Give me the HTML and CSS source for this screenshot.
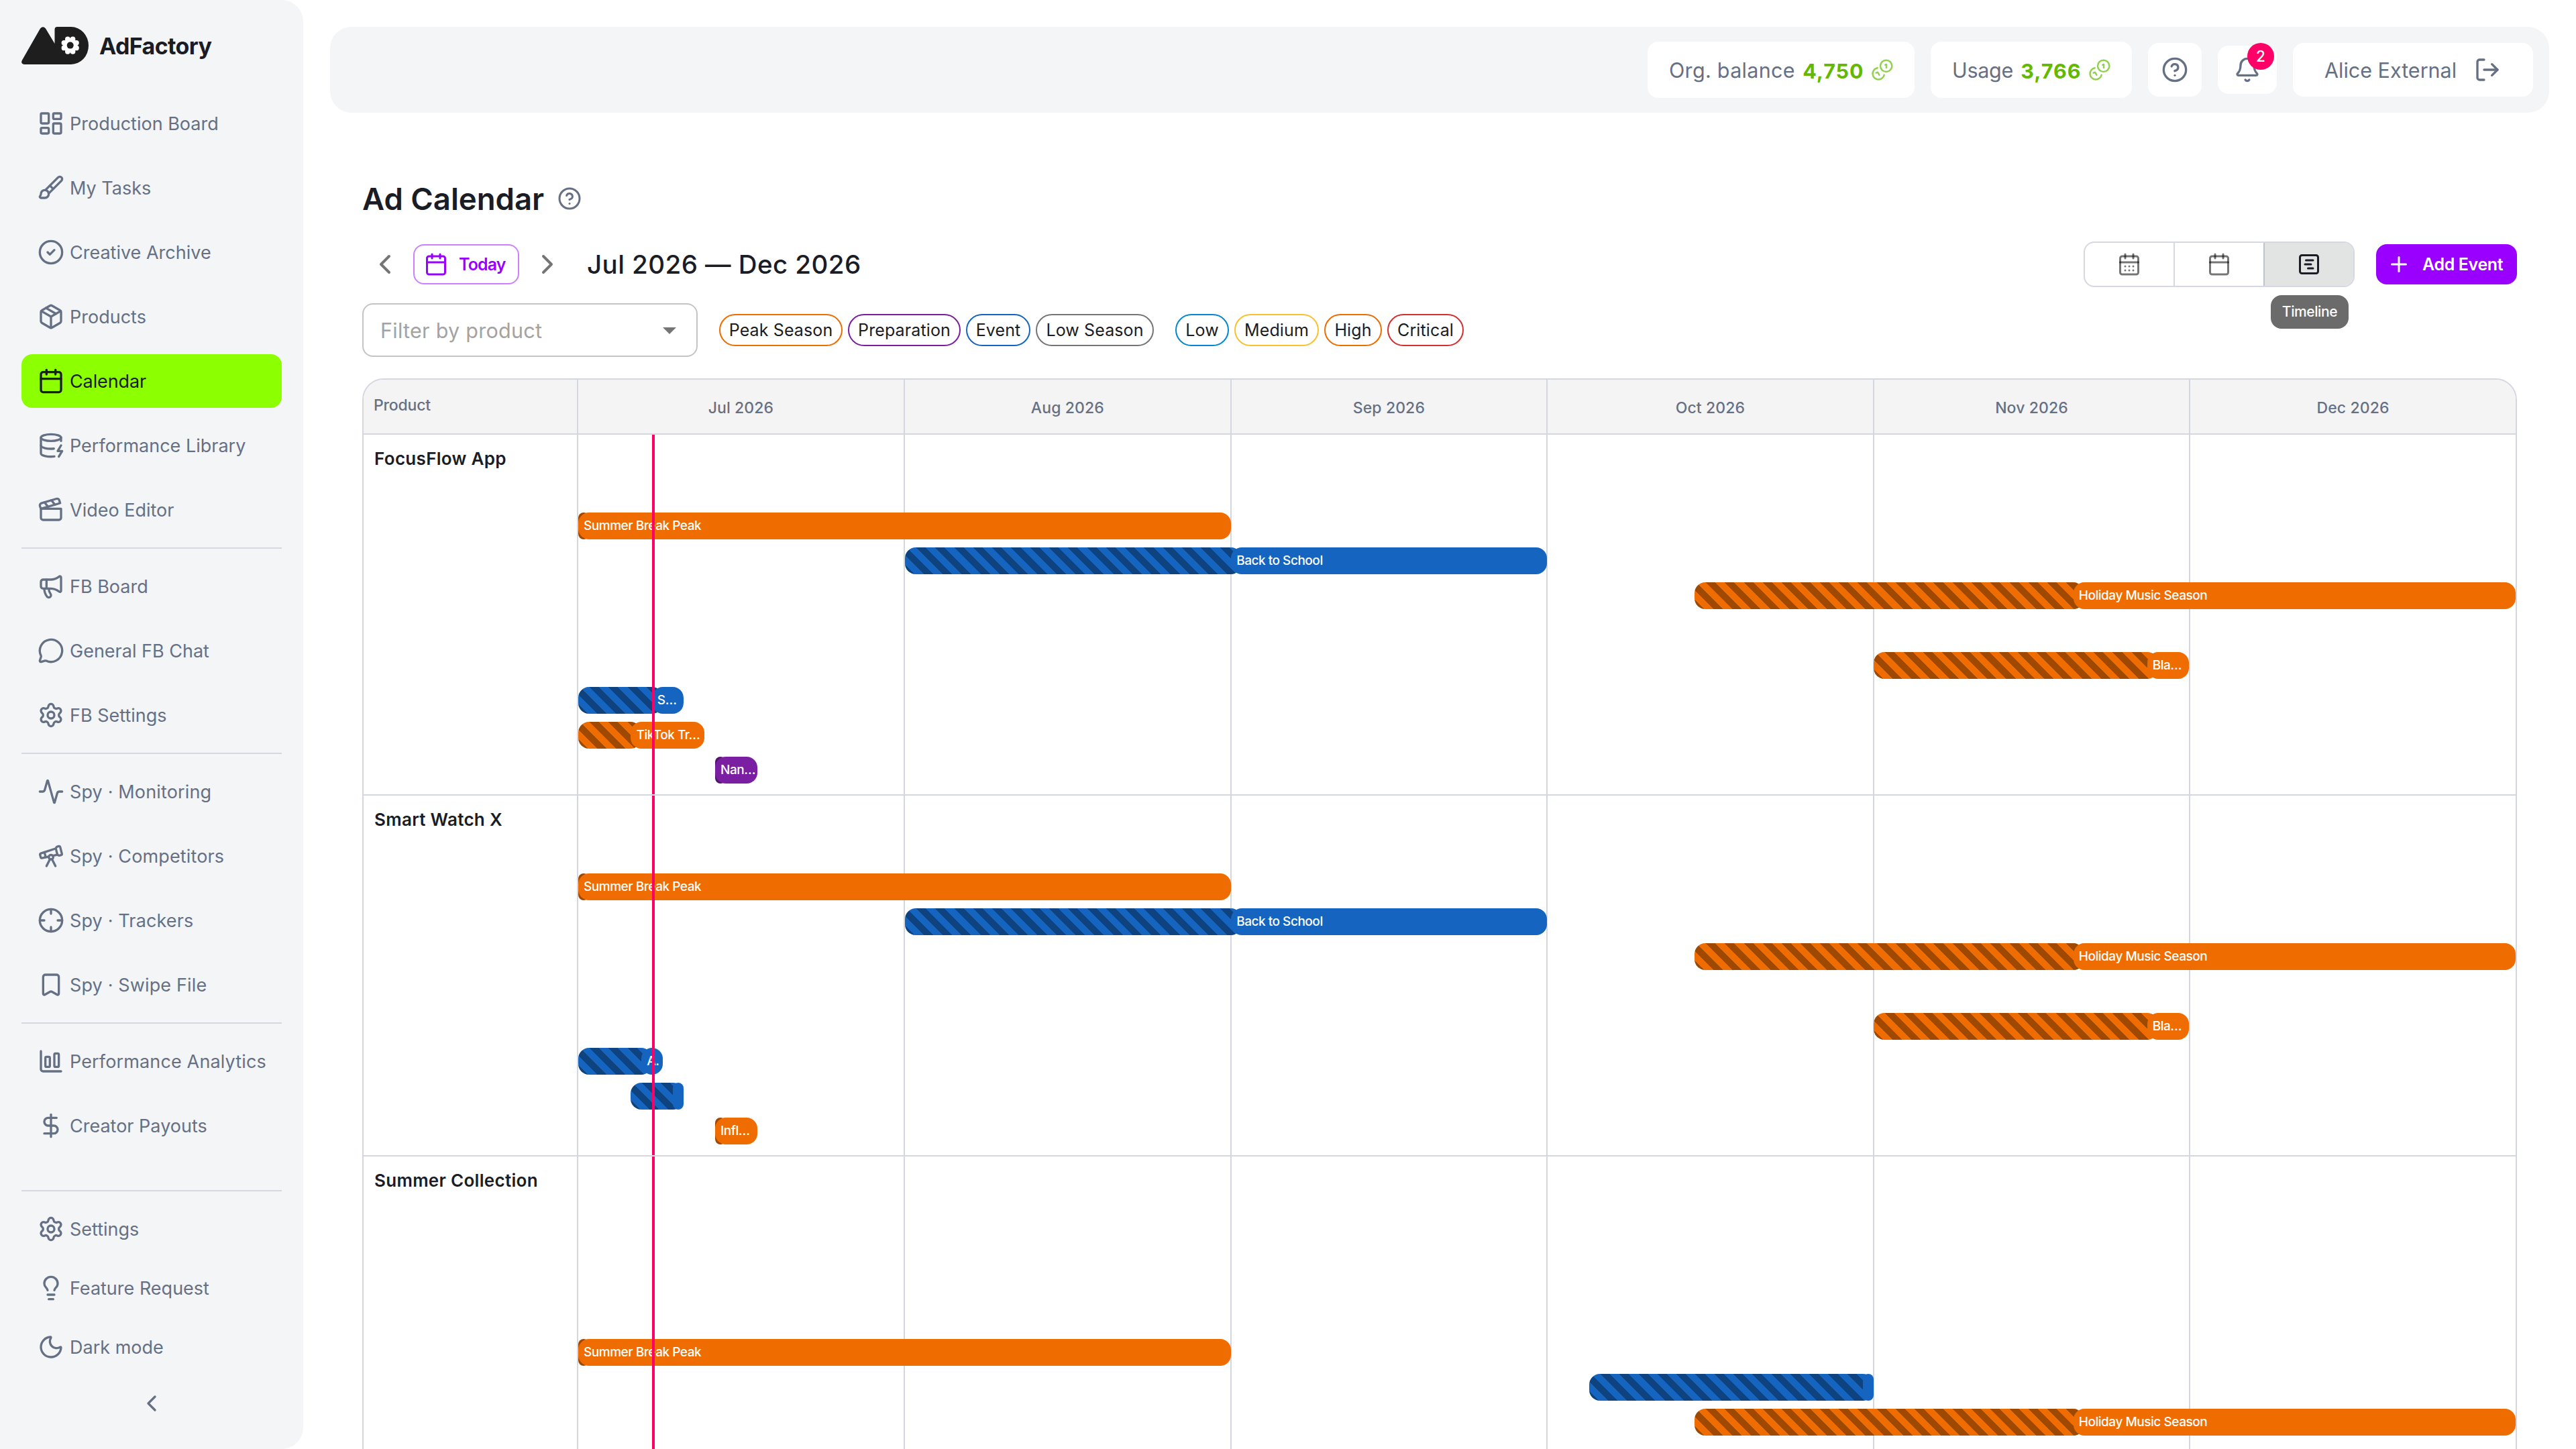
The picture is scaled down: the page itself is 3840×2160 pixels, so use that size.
FILE: index.html
```html
<!DOCTYPE html>
<html lang="en">
<head>
<meta charset="utf-8">
<title>AdFactory – Ad Calendar</title>
<link rel="stylesheet" href="styles.css">
</head>
<body>
<svg class="sprite" aria-hidden="true">
  <symbol id="i-board" viewBox="0 0 24 24"><rect width="7" height="9" x="3" y="3" rx="1"/><rect width="7" height="5" x="14" y="3" rx="1"/><rect width="7" height="9" x="14" y="12" rx="1"/><rect width="7" height="5" x="3" y="16" rx="1"/></symbol>
  <symbol id="i-brush" viewBox="0 0 24 24"><path d="m11 10 3 3"/><path d="M6.5 21A3.5 3.5 0 1 0 3 17.5a2.62 2.62 0 0 1-.708 1.792A1 1 0 0 0 3 21z"/><path d="M9.969 17.031 21.378 5.624a1 1 0 0 0-3.002-3.002L6.967 14.031"/></symbol>
  <symbol id="i-check" viewBox="0 0 24 24"><circle cx="12" cy="12" r="10"/><path d="m9 12 2 2 4-4"/></symbol>
  <symbol id="i-package" viewBox="0 0 24 24"><path d="M11 21.73a2 2 0 0 0 2 0l7-4A2 2 0 0 0 21 16V8a2 2 0 0 0-1-1.73l-7-4a2 2 0 0 0-2 0l-7 4A2 2 0 0 0 3 8v8a2 2 0 0 0 1 1.73z"/><path d="M12 22V12"/><path d="M3.29 7 12 12l8.71-5"/><path d="m7.5 4.27 9 5.15"/></symbol>
  <symbol id="i-calendar" viewBox="0 0 24 24"><path d="M8 2v4"/><path d="M16 2v4"/><rect width="18" height="18" x="3" y="4" rx="2"/><path d="M3 10h18"/></symbol>
  <symbol id="i-calendar-days" viewBox="0 0 24 24"><path d="M8 2v4"/><path d="M16 2v4"/><rect width="18" height="18" x="3" y="4" rx="2"/><path d="M3 10h18"/><path d="M8 14h.01"/><path d="M12 14h.01"/><path d="M16 14h.01"/><path d="M8 18h.01"/><path d="M12 18h.01"/><path d="M16 18h.01"/></symbol>
  <symbol id="i-gantt" viewBox="0 0 24 24"><rect width="18" height="18" x="3" y="3" rx="2"/><path d="M9 8h7"/><path d="M8 12h6"/><path d="M11 16h5"/></symbol>
  <symbol id="i-database" viewBox="0 0 24 24"><ellipse cx="12" cy="5" rx="9" ry="3"/><path d="M3 5V19A9 3 0 0 0 15 21.84"/><path d="M21 5V8"/><path d="M21 12L18 17H22L19 22"/><path d="M3 12A9 3 0 0 0 14.59 14.87"/></symbol>
  <symbol id="i-clapper" viewBox="0 0 24 24"><path d="M20.2 6 3 11l-.9-2.4c-.3-1.1.3-2.2 1.3-2.5l13.5-4c1.1-.3 2.2.3 2.5 1.3Z"/><path d="m6.2 5.3 3.1 3.9"/><path d="m12.4 3.4 3.1 4"/><path d="M3 11h18v8a2 2 0 0 1-2 2H5a2 2 0 0 1-2-2Z"/></symbol>
  <symbol id="i-megaphone" viewBox="0 0 24 24"><path d="M11 6a13 13 0 0 0 8.4-2.8A1 1 0 0 1 21 4v12a1 1 0 0 1-1.6.8A13 13 0 0 0 11 14H5a2 2 0 0 1-2-2V8a2 2 0 0 1 2-2z"/><path d="M6 14a12 12 0 0 0 2.4 7.2 2 2 0 0 0 3.2-2.4A8 8 0 0 1 10 14"/><path d="M8 6v8"/></symbol>
  <symbol id="i-message" viewBox="0 0 24 24"><path d="M2.992 16.342a2 2 0 0 1 .094 1.167l-1.065 3.29a1 1 0 0 0 1.236 1.168l3.413-.998a2 2 0 0 1 1.099.092 10 10 0 1 0-4.777-4.719"/></symbol>
  <symbol id="i-settings" viewBox="0 0 24 24"><path d="M9.671 4.136a2.34 2.34 0 0 1 4.659 0 2.34 2.34 0 0 0 3.319 1.915 2.34 2.34 0 0 1 2.33 4.033 2.34 2.34 0 0 0 0 3.831 2.34 2.34 0 0 1-2.33 4.033 2.34 2.34 0 0 0-3.319 1.915 2.34 2.34 0 0 1-4.659 0 2.34 2.34 0 0 0-3.32-1.915 2.34 2.34 0 0 1-2.33-4.033 2.34 2.34 0 0 0 0-3.831A2.34 2.34 0 0 1 6.35 6.051a2.34 2.34 0 0 0 3.319-1.915"/><circle cx="12" cy="12" r="3"/></symbol>
  <symbol id="i-activity" viewBox="0 0 24 24"><path d="M22 12h-2.48a2 2 0 0 0-1.93 1.46l-2.35 8.36a.25.25 0 0 1-.48 0L9.24 2.18a.25.25 0 0 0-.48 0l-2.35 8.36A2 2 0 0 1 4.49 12H2"/></symbol>
  <symbol id="i-telescope" viewBox="0 0 24 24"><path d="m10.065 12.493-6.18 1.318a.934.934 0 0 1-1.108-.702l-.537-2.15a1.07 1.07 0 0 1 .691-1.265l13.504-4.44"/><path d="m13.56 11.747 4.332-.924"/><path d="m16 21-3.105-6.21"/><path d="M16.485 5.94a2 2 0 0 1 1.455-2.425l1.09-.272a1 1 0 0 1 1.212.727l1.515 6.06a1 1 0 0 1-.727 1.213l-1.09.272a2 2 0 0 1-2.425-1.455z"/><path d="m6.158 8.633 1.114 4.456"/><path d="m8 21 3.105-6.21"/><circle cx="12" cy="13" r="2"/></symbol>
  <symbol id="i-crosshair" viewBox="0 0 24 24"><circle cx="12" cy="12" r="10"/><path d="M22 12h-4"/><path d="M6 12H2"/><path d="M12 6V2"/><path d="M12 22v-4"/></symbol>
  <symbol id="i-bookmark" viewBox="0 0 24 24"><path d="M17 3a2 2 0 0 1 2 2v15a1 1 0 0 1-1.496.868l-4.512-2.578a2 2 0 0 0-1.984 0l-4.512 2.578A1 1 0 0 1 5 20V5a2 2 0 0 1 2-2z"/></symbol>
  <symbol id="i-chart" viewBox="0 0 24 24"><path d="M3 3v16a2 2 0 0 0 2 2h16"/><rect x="15" y="5" width="4" height="12" rx="1"/><rect x="7" y="8" width="4" height="9" rx="1"/></symbol>
  <symbol id="i-dollar" viewBox="0 0 24 24"><path d="M12 2v20"/><path d="M17 5H9.5a3.5 3.5 0 0 0 0 7h5a3.5 3.5 0 0 1 0 7H6"/></symbol>
  <symbol id="i-bulb" viewBox="0 0 24 24"><path d="M15 14c.2-1 .7-1.7 1.5-2.5 1-.9 1.5-2.2 1.5-3.5A6 6 0 0 0 6 8c0 1 .2 2.2 1.5 3.5.7.7 1.3 1.5 1.5 2.5"/><path d="M9 18h6"/><path d="M10 22h4"/></symbol>
  <symbol id="i-moon" viewBox="0 0 24 24"><path d="M20.985 12.486a9 9 0 1 1-9.473-9.472c.405-.022.617.46.402.803a6 6 0 0 0 8.268 8.268c.344-.215.825-.004.803.401"/></symbol>
  <symbol id="i-left" viewBox="0 0 24 24"><path d="m15 18-6-6 6-6"/></symbol>
  <symbol id="i-right" viewBox="0 0 24 24"><path d="m9 18 6-6-6-6"/></symbol>
  <symbol id="i-help" viewBox="0 0 24 24"><circle cx="12" cy="12" r="10"/><path d="M9.09 9a3 3 0 0 1 5.83 1c0 2-3 3-3 3"/><path d="M12 17h.01"/></symbol>
  <symbol id="i-bell" viewBox="0 0 24 24"><path d="M10.268 21a2 2 0 0 0 3.464 0"/><path d="M3.262 15.326A1 1 0 0 0 4 17h16a1 1 0 0 0 .74-1.673C19.41 13.956 18 12.499 18 8A6 6 0 0 0 6 8c0 4.499-1.411 5.956-2.738 7.326"/></symbol>
  <symbol id="i-logout" viewBox="0 0 24 24"><path d="m16 17 5-5-5-5"/><path d="M21 12H9"/><path d="M9 21H5a2 2 0 0 1-2-2V5a2 2 0 0 1 2-2h4"/></symbol>
  <symbol id="i-plus" viewBox="0 0 24 24"><path d="M5 12h14"/><path d="M12 5v14"/></symbol>
  <symbol id="i-coins" viewBox="0 0 96 96"><circle cx="65" cy="31" r="26"/><path d="M26 40A26 26 0 1 0 56 71"/><path d="M61 26l5-2v15"/><path d="M20 62l7-3 7 12"/></symbol>
</svg>

<div class="app">
  <aside class="sidebar">
    <div class="brand">
      <svg class="brand-mark" viewBox="0 0 100 56" width="100" height="56">
        <path fill="#1e1e1e" d="M4 56Q-1.500 55 .8 50L28 2.500Q32-2 36 2.500L49.500 25V4Q49.500 0 53.500 0H74A26 28 0 0 1 74 56Z"/>
        <g fill="#fff">
          <circle cx="72.700" cy="27.600" r="10.500"/>
          <circle cx="81.900" cy="31.400" r="3.900"/><circle cx="76.500" cy="36.800" r="3.900"/>
          <circle cx="68.900" cy="36.800" r="3.900"/><circle cx="63.500" cy="31.400" r="3.900"/>
          <circle cx="63.500" cy="23.800" r="3.900"/><circle cx="68.900" cy="18.400" r="3.900"/>
          <circle cx="76.500" cy="18.400" r="3.900"/><circle cx="81.900" cy="23.800" r="3.900"/>
        </g>
        <circle cx="72.700" cy="27.600" r="5" fill="#1e1e1e"/>
      </svg>
      <span class="brand-name">AdFactory</span>
    </div>
    <nav class="nav">
      <a class="item"><svg class="icon"><use href="#i-board"/></svg>Production Board</a>
      <a class="item"><svg class="icon"><use href="#i-brush"/></svg>My Tasks</a>
      <a class="item"><svg class="icon"><use href="#i-check"/></svg>Creative Archive</a>
      <a class="item"><svg class="icon"><use href="#i-package"/></svg>Products</a>
      <a class="item active"><svg class="icon"><use href="#i-calendar"/></svg>Calendar</a>
      <a class="item"><svg class="icon"><use href="#i-database"/></svg>Performance Library</a>
      <a class="item"><svg class="icon"><use href="#i-clapper"/></svg>Video Editor</a>
      <hr class="divider">
      <a class="item"><svg class="icon"><use href="#i-megaphone"/></svg>FB Board</a>
      <a class="item"><svg class="icon"><use href="#i-message"/></svg>General FB Chat</a>
      <a class="item"><svg class="icon"><use href="#i-settings"/></svg>FB Settings</a>
      <hr class="divider">
      <a class="item wide"><svg class="icon"><use href="#i-activity"/></svg>Spy · Monitoring</a>
      <a class="item wide"><svg class="icon"><use href="#i-telescope"/></svg>Spy · Competitors</a>
      <a class="item wide"><svg class="icon"><use href="#i-crosshair"/></svg>Spy · Trackers</a>
      <a class="item wide"><svg class="icon"><use href="#i-bookmark"/></svg>Spy · Swipe File</a>
      <hr class="divider">
      <a class="item wide"><svg class="icon"><use href="#i-chart"/></svg>Performance Analytics</a>
      <a class="item"><svg class="icon"><use href="#i-dollar"/></svg>Creator Payouts</a>
    </nav>
    <nav class="nav nav-bottom">
      <a class="item"><svg class="icon"><use href="#i-settings"/></svg>Settings</a>
      <a class="item"><svg class="icon"><use href="#i-bulb"/></svg>Feature Request</a>
      <a class="item"><svg class="icon"><use href="#i-moon"/></svg>Dark mode</a>
    </nav>
    <div class="collapse"><svg class="icon"><use href="#i-left"/></svg></div>
  </aside>

  <main class="main">
    <header class="topbar">
      <div class="pill balance"><span class="lbl-org">Org. balance</span><span class="credits">4,750</span><svg class="coins"><use href="#i-coins"/></svg></div>
      <div class="pill usage"><span class="lbl-usage">Usage</span><span class="credits">3,766</span><svg class="coins"><use href="#i-coins"/></svg></div>
      <div class="pill help"><svg class="icon"><use href="#i-help"/></svg></div>
      <div class="pill bell"><svg class="icon"><use href="#i-bell"/></svg><span class="badge">2</span></div>
      <div class="pill user"><span>Alice External</span><svg class="icon"><use href="#i-logout"/></svg></div>
    </header>

    <div class="content">
      <div class="title-row"><h1>Ad Calendar</h1><svg class="icon icon-s"><use href="#i-help"/></svg></div>

      <div class="toolbar">
        <div class="arrow"><svg class="icon icon-l"><use href="#i-left"/></svg></div>
        <div class="today-btn"><svg class="icon icon-s"><use href="#i-calendar"/></svg><span>Today</span></div>
        <div class="arrow"><svg class="icon icon-l"><use href="#i-right"/></svg></div>
        <div class="range">Jul 2026 — Dec 2026</div>
        <div class="views">
          <div class="view"><svg class="icon icon-s"><use href="#i-calendar-days"/></svg></div>
          <div class="view"><svg class="icon icon-s"><use href="#i-calendar"/></svg></div>
          <div class="view selected"><svg class="icon icon-s"><use href="#i-gantt"/></svg><span class="tooltip">Timeline</span></div>
        </div>
        <div class="add-btn"><svg class="icon icon-s"><use href="#i-plus"/></svg><span>Add Event</span></div>
      </div>

      <div class="filters">
        <div class="select"><span>Filter by product</span><svg width="48" height="48" viewBox="0 0 24 24"><path fill="#757575" d="m7 10 5 5 5-5z"/></svg></div>
        <div class="chips">
          <span class="chip c-peak">Peak Season</span>
          <span class="chip c-prep">Preparation</span>
          <span class="chip c-event">Event</span>
          <span class="chip c-lowseason">Low Season</span>
        </div>
        <div class="chips">
          <span class="chip c-low">Low</span>
          <span class="chip c-medium">Medium</span>
          <span class="chip c-high">High</span>
          <span class="chip c-critical">Critical</span>
        </div>
      </div>

      <section class="timeline">
        <div class="head">
          <div class="head-product">Product</div>
          <div class="months">
            <div class="m31">Jul 2026</div><div class="m31">Aug 2026</div><div class="m30">Sep 2026</div><div class="m31">Oct 2026</div><div class="m30">Nov 2026</div><div class="m31">Dec 2026</div>
          </div>
        </div>

        <div class="row">
          <div class="product">FocusFlow App</div>
          <div class="months"><div class="m31"></div><div class="m31"></div><div class="m30"></div><div class="m31"></div><div class="m30"></div><div class="m31"></div></div>
          <div class="lanes">
            <i class="prep orange none" style="grid-area:1/1/2/2"></i><div class="bar orange" style="grid-area:1/1/2/63"><span>Summer Break Peak</span></div>
            <i class="prep blue" style="grid-area:2/32/3/63"></i><div class="bar blue" style="grid-area:2/63/3/93"><span>Back to School</span></div>
            <i class="prep orange" style="grid-area:3/107/4/143"></i><div class="bar orange" style="grid-area:3/143/4/185"><span>Holiday Music Season</span></div>
            <i class="prep orange" style="grid-area:5/124/6/150"></i><div class="bar orange" style="grid-area:5/150/6/154"><span>Bla…</span></div>
            <i class="prep blue" style="grid-area:6/1/7/8"></i><div class="bar blue" style="grid-area:6/8/7/11"><span>S…</span></div>
            <i class="prep orange" style="grid-area:7/1/8/6"></i><div class="bar orange" style="grid-area:7/6/8/13"><span>TikTok Tr…</span></div>
            <i class="prep purple none" style="grid-area:8/14/9/15"></i><div class="bar purple" style="grid-area:8/14/9/18"><span>Nan…</span></div>
            <b class="now"></b>
          </div>
        </div>

        <div class="row">
          <div class="product">Smart Watch X</div>
          <div class="months"><div class="m31"></div><div class="m31"></div><div class="m30"></div><div class="m31"></div><div class="m30"></div><div class="m31"></div></div>
          <div class="lanes">
            <i class="prep orange none" style="grid-area:1/1/2/2"></i><div class="bar orange" style="grid-area:1/1/2/63"><span>Summer Break Peak</span></div>
            <i class="prep blue" style="grid-area:2/32/3/63"></i><div class="bar blue" style="grid-area:2/63/3/93"><span>Back to School</span></div>
            <i class="prep orange" style="grid-area:3/107/4/143"></i><div class="bar orange" style="grid-area:3/143/4/185"><span>Holiday Music Season</span></div>
            <i class="prep orange" style="grid-area:5/124/6/150"></i><div class="bar orange" style="grid-area:5/150/6/154"><span>Bla…</span></div>
            <i class="prep blue" style="grid-area:6/1/7/7"></i><div class="bar blue" style="grid-area:6/7/7/9"><span>A.</span></div>
            <i class="prep blue" style="grid-area:7/6/8/10"></i><div class="bar blue" style="grid-area:7/10/8/11"></div>
            <i class="prep orange none" style="grid-area:8/14/9/15"></i><div class="bar orange" style="grid-area:8/14/9/18"><span>Infl…</span></div>
            <b class="now"></b>
          </div>
        </div>

        <div class="row">
          <div class="product">Summer Collection</div>
          <div class="months"><div class="m31"></div><div class="m31"></div><div class="m30"></div><div class="m31"></div><div class="m30"></div><div class="m31"></div></div>
          <div class="lanes">
            <i class="prep orange none" style="grid-area:4/1/5/2"></i><div class="bar orange" style="grid-area:4/1/5/63"><span>Summer Break Peak</span></div>
            <i class="prep blue" style="grid-area:5/97/6/123"></i><div class="bar blue" style="grid-area:5/123/6/124"></div>
            <i class="prep orange" style="grid-area:6/107/7/143"></i><div class="bar orange" style="grid-area:6/143/7/185"><span>Holiday Music Season</span></div>
            <b class="now"></b>
          </div>
        </div>
      </section>
    </div>
  </main>
</div>
</body>
</html>
```
FILE: styles.css
```css
* { box-sizing: border-box; }

body {
  margin: 0;
  width: 3840px;
  height: 2160px;
  overflow: hidden;
  background: #fff;
  color: #1a1c26;
  font-family: Inter, "Liberation Sans", sans-serif;
}

.sprite { display: none; }

.icon {
  width: 40px;
  height: 40px;
  flex: none;
  fill: none;
  stroke: currentColor;
  stroke-width: 2;
  stroke-linecap: round;
  stroke-linejoin: round;
}
.icon-s { width: 36px; height: 36px; }
.icon-l { width: 48px; height: 48px; }

.app { display: flex; height: 2160px; }

/* Sidebar */
.sidebar {
  width: 452px;
  flex: none;
  height: 2160px;
  padding: 40px 32px 0;
  display: flex;
  flex-direction: column;
  background: #f3f5f7;
  border-radius: 0 32px 32px 0;
  color: #667085;
}
.brand {
  display: flex;
  align-items: center;
  gap: 16px;
  height: 56px;
  margin-bottom: 48px;
}
.brand-mark { display: block; }
.brand-name {
  font-size: 34px;
  font-weight: 700;
  letter-spacing: -0.62px;
  color: #1a1c26;
}
.nav { display: flex; flex-direction: column; gap: 16px; }
.item {
  display: flex;
  align-items: center;
  gap: 8px;
  height: 80px;
  padding-left: 24px;
  border-radius: 16px;
  font-size: 27px;
  white-space: nowrap;
}
.item.wide { letter-spacing: 0.14px; }
.item.active { background: #8cff00; color: #1a1c26; letter-spacing: -0.1px; }
.divider { width: 100%; height: 2px; margin: 0; border: 0; background: #d5d7e3; }
.nav-bottom {
  margin-top: 56px;
  padding-top: 16px;
  gap: 8px;
  border-top: 2px solid #d5d7e3;
}
.collapse { display: flex; justify-content: center; margin-top: 24px; }

/* Top bar */
.main { flex: 1; min-width: 0; padding: 40px 40px 0; }
.topbar {
  height: 128px;
  display: flex;
  align-items: center;
  justify-content: flex-end;
  gap: 24px;
  padding: 0 24px;
  background: #f3f5f7;
  border-radius: 32px;
  color: #667085;
  font-size: 30.5px;
}
.pill {
  display: flex;
  align-items: center;
  height: 80px;
  background: #fff;
  border-radius: 16px;
  white-space: nowrap;
}
.balance, .usage { height: 84px; padding: 0 32px; justify-content: space-between; }
.balance { width: 398px; }
.usage { width: 300px; }
.lbl-org { letter-spacing: 0.3px; }
.lbl-usage { letter-spacing: -0.3px; }
.credits { padding-top: 3px; font-weight: 700; letter-spacing: 1px; color: #63b900; }
.coins {
  width: 32px;
  height: 32px;
  fill: none;
  stroke: #92d050;
  stroke-width: 7.5;
  stroke-linecap: round;
  stroke-linejoin: round;
}
.help { width: 80px; justify-content: center; }
.bell { position: relative; width: 88px; height: 72px; justify-content: center; }
.badge {
  position: absolute;
  top: -4px;
  right: 4px;
  width: 40px;
  height: 40px;
  border-radius: 50%;
  background: #f06;
  color: #fff;
  font-size: 22.5px;
  font-weight: 500;
  line-height: 40px;
  text-align: center;
}
.user { width: 358px; padding: 0 48px 0 47px; justify-content: space-between; }

/* Page heading and toolbar */
.content { padding: 96px 48px 0; }
.title-row { display: flex; align-items: center; gap: 20px; height: 64px; color: #667085; }
h1 { margin: 0; font-size: 45.5px; font-weight: 600; letter-spacing: 0; color: #1a1c26; }

.toolbar { display: flex; align-items: center; height: 68px; margin-top: 32px; }
.arrow { width: 68px; display: flex; justify-content: center; color: #757575; }
.today-btn {
  display: flex;
  align-items: center;
  gap: 16px;
  width: 158px;
  height: 60px;
  margin: 0 8px;
  padding-left: 14px;
  border: 2px solid #cc80ff;
  border-radius: 16px;
  color: #90f;
  font-size: 25px;
  font-weight: 600;
  letter-spacing: -0.9px;
}
.range { margin-left: 25px; font-size: 38.5px; font-weight: 500; letter-spacing: 0.44px; white-space: nowrap; }
.views {
  display: flex;
  width: 404px;
  height: 68px;
  margin-left: auto;
  border: 2px solid #d5d7e3;
  border-radius: 16px;
  color: rgba(0, 0, 0, 0.54);
}
.view { position: relative; flex: 1; display: flex; align-items: center; justify-content: center; }
.view + .view { border-left: 2px solid #d5d7e3; }
.view.selected { background: #e2e4e4; color: #1a1c26; border-left-color: #bfc3cb; border-radius: 0 14px 14px 0; }
.tooltip {
  position: absolute;
  top: 78px;
  left: 9px;
  width: 116px;
  height: 50px;
  border-radius: 16px;
  background: #6b6b6b;
  color: #fff;
  font-size: 21px;
  font-weight: 500;
  letter-spacing: -0.4px;
  line-height: 50px;
  text-align: center;
}
.add-btn {
  display: flex;
  align-items: center;
  gap: 17px;
  width: 210px;
  height: 60px;
  margin-left: 32px;
  padding-left: 16px;
  border-radius: 16px;
  background: #90f;
  color: #fff;
  font-size: 25px;
  font-weight: 600;
  letter-spacing: -0.38px;
  white-space: nowrap;
}

/* Filters */
.filters { display: flex; align-items: center; gap: 32px; height: 80px; margin-top: 24px; }
.select {
  display: flex;
  align-items: center;
  justify-content: space-between;
  width: 500px;
  height: 80px;
  padding: 0 16px 0 25px;
  border: 2px solid #c4c4c4;
  border-radius: 16px;
  color: #a3a3a3;
  font-size: 30.5px;
  letter-spacing: 0.27px;
}
.chips { display: flex; gap: 8px; }
.chip {
  display: flex;
  align-items: center;
  justify-content: center;
  height: 48px;
  border: 2px solid;
  border-radius: 24px;
  font-size: 25px;
  letter-spacing: 0.12px;
  white-space: nowrap;
}
.c-peak { width: 184px; border-color: #ef6c00; }
.c-prep { width: 168px; border-color: #7b1fa2; }
.c-event { width: 96px; border-color: #1565c0; }
.c-lowseason { width: 176px; border-color: #757575; }
.c-low { width: 80px; border-color: #0288d1; }
.c-medium { width: 126px; border-color: #fbc02d; }
.c-high { width: 86px; border-color: #ef6c00; }
.c-critical { width: 114px; border-color: #d32f2f; }

/* Timeline */
.timeline {
  margin-top: 32px;
  border: 2px solid #d5d7e0;
  border-radius: 32px 32px 0 0;
  overflow: hidden;
}
.head, .row {
  display: grid;
  grid-template-columns: 320px 2888px;
  border-bottom: 2px solid #d5d7e0;
}
.head {
  height: 82px;
  background: #f4f4f4;
  color: #667085;
  font-size: 23px;
  font-weight: 500;
}
.head-product { padding: 24px 15px; line-height: 28px; letter-spacing: -0.2px; border-right: 2px solid #d5d7e0; }
.head .months > div { padding-top: 28px; line-height: 28px; text-align: center; letter-spacing: 0.1px; }
.months { display: flex; grid-area: 1 / 2; }
.months > div { border-right: 2px solid #d5d7e0; flex-basis: 0; min-width: 0; }
.months > div:last-child { border-right: 0; }
.m31 { flex-grow: 31; }
.m30 { flex-grow: 30; }

.row { height: 538px; }
.product {
  padding: 20px 16px;
  border-right: 2px solid #d5d7e0;
  font-size: 26px;
  font-weight: 600;
  line-height: 32px;
  letter-spacing: 0.3px;
  white-space: nowrap;
}
/* One grid column per day, July 1 to December 31 */
.lanes {
  position: relative;
  grid-area: 1 / 2;
  display: grid;
  grid-template-columns: repeat(184, minmax(0, 1fr));
  grid-template-rows: repeat(8, 40px);
  row-gap: 12px;
  padding-top: 116px;
}
.bar, .prep { border-radius: 16px; }
.bar {
  padding: 0 8px;
  background: var(--c);
  color: #fff;
  font-size: 19px;
  font-weight: 500;
  line-height: 39px;
  letter-spacing: -0.47px;
  white-space: nowrap;
}
.bar span { display: block; }
.prep {
  margin-right: -16px;
  background: repeating-linear-gradient(45deg, var(--d) 0 10px, var(--c) 10px 20px);
}
.prep.none { width: 16px; margin-right: 0; background: var(--d); }
.orange { --c: #ef6c00; --d: #9f4800; }
.blue { --c: #1565c0; --d: #0e4380; }
.purple { --c: #7b1fa2; --d: #52146c; }

.now {
  position: absolute;
  top: 0;
  bottom: 0;
  left: 110px;
  width: 4px;
  background: #f06;
}
```
